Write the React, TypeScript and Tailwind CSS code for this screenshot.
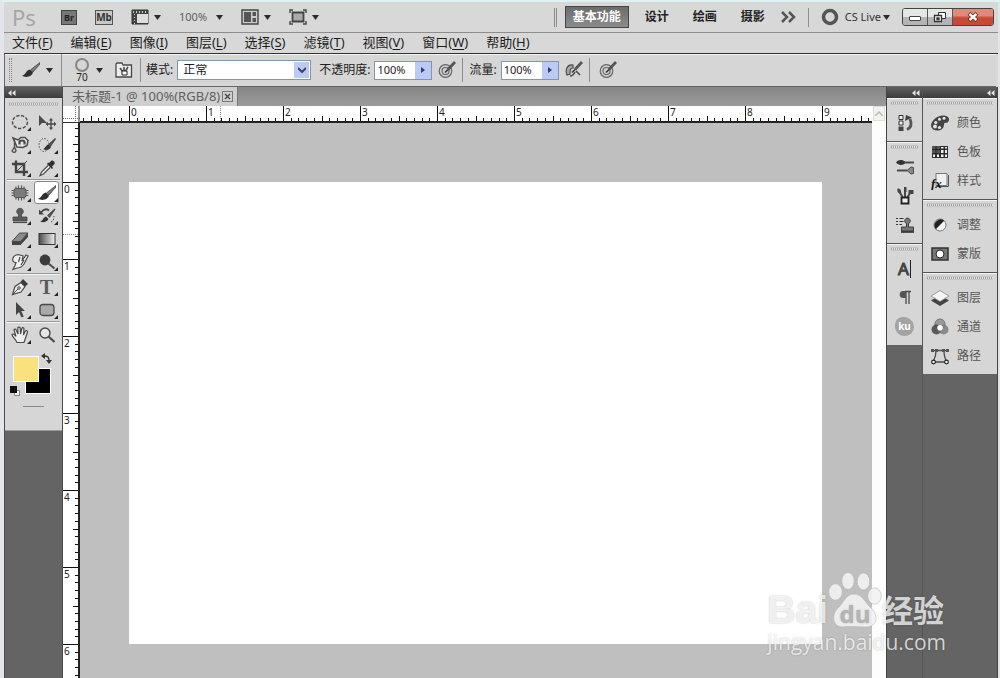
import React, { useLayoutEffect, useRef, useState } from 'react';
import clsx from 'clsx';

type IconProps = { className?: string };
type IconType = (props: IconProps) => React.ReactElement;

/* ── Data ── */
const menus = [
  ['文件', 'F'],
  ['编辑', 'E'],
  ['图像', 'I'],
  ['图层', 'L'],
  ['选择', 'S'],
  ['滤镜', 'T'],
  ['视图', 'V'],
  ['窗口', 'W'],
  ['帮助', 'H'],
];

const workspaces = ['基本功能', '设计', '绘画', '摄影'];

/* ── Small shared pieces ── */
function Svg({ children, className, size = 18 }: { children: React.ReactNode; className?: string; size?: number }) {
  return (
    <svg viewBox={`0 0 ${size} ${size}`} width={size} height={size} fill="none" stroke="#4a4a4a" className={clsx('shrink-0', className)} aria-hidden="true">
      {children}
    </svg>
  );
}

function Caret({ className }: IconProps) {
  return (
    <svg viewBox="0 0 7 5" width="7" height="5" className={clsx('shrink-0', className)} aria-hidden="true">
      <path d="M0 0h7L3.5 5z" fill="#2b2b2b" />
    </svg>
  );
}

function Collapse() {
  return (
    <svg viewBox="0 0 8 6" width="8" height="6" aria-hidden="true">
      <path d="M3.5 0v6L0 3zM7.5 0v6L4 3z" fill="#e4e4e4" />
    </svg>
  );
}

function Grip() {
  return <div className="h-1 border-y border-[#c4c4c4] bg-[repeating-linear-gradient(90deg,#a2a2a2_0_1px,#e2e2e2_1px_2px)]" />;
}

function Divider({ className }: IconProps) {
  return <div className={clsx('w-px shrink-0 bg-[#8f8f8f]', className)} />;
}

/* ── Tool icons ── */
const Marquee: IconType = () => (
  <Svg><ellipse cx="9" cy="9" rx="7.5" ry="6.5" strokeWidth="1.4" strokeDasharray="3.2 1.6" /></Svg>
);
const Move: IconType = () => (
  <Svg>
    <path d="M1 2v11l3-3h5z" fill="#4a4a4a" stroke="none" />
    <path d="M13 7v8M9 11h8" strokeWidth="1.4" />
    <path d="M13 5l2.200 2.500h-4.400zM13 17l2.200-2.500h-4.400zM7.500 11l2.500-2.200v4.400zM18.500 11L16 8.800v4.400z" fill="#4a4a4a" stroke="none" />
  </Svg>
);
const Lasso: IconType = () => (
  <Svg>
    <path d="M2 2l5 2 3-2.500h4l3 3-1 5-4 2-6-.5z" fill="#e6e6e6" strokeWidth="1.500" />
    <path d="M8.500 8.500V6c0-2 5-2 5 0v2.500" strokeWidth="2.200" />
    <path d="M3.500 4v7L1 15c1 2 4 1.500 4-.5L3.500 11" strokeWidth="1.300" />
  </Svg>
);
const QuickSelect: IconType = () => (
  <Svg>
    <ellipse cx="6" cy="9" rx="5" ry="6.500" strokeDasharray="1.500 1.500" />
    <path d="M17.500 2.500L11 8.500l1.500 1.500z" fill="#666" strokeWidth="1.300" />
    <path d="M5 13c2 0 2.500-4 5.500-4.500L13 11c-1 3-5 4-8 2z" fill="#333" stroke="none" />
  </Svg>
);
const Crop: IconType = () => (
  <Svg>
    <path d="M5 1.500v11.500h12M1 5h12v12" strokeWidth="2.400" stroke="#444" />
    <path d="M5.500 12.500L16 2" />
  </Svg>
);
const Eyedropper: IconType = () => (
  <Svg>
    <path d="M10 6.500L3.500 13 2 16.500 5.500 15 12 8.500" fill="#eee" strokeWidth="1.200" />
    <path d="M9 5l5 5 1-1-1-1.500L16.500 5c1.200-1.500-1.500-4.500-3.200-3.300L11 4 10 3.500z" fill="#333" stroke="none" />
  </Svg>
);
const Healing: IconType = () => (
  <Svg>
    <path d="M5 2.500v13M7.500 1.500v15M10.500 1.500v15M13 2.500v13M.5 6.500h17M.5 9h17M.5 11.500h17" strokeWidth="1.100" stroke="#555" />
    <rect x="3" y="4.500" width="12" height="9" rx="2" fill="#7c7c7c" stroke="#555" />
  </Svg>
);
const Brush: IconType = () => (
  <Svg>
    <path d="M18 1.500L9 8.500l2 2.500 7-8z" fill="#7d7d7d" stroke="#444" strokeWidth=".8" />
    <path d="M0 14.500c3.500 0 3.500-5 8-6l3 3c-1 4-7 6-11 3z" fill="#2f2f2f" stroke="none" />
  </Svg>
);
const Stamp: IconType = () => (
  <Svg>
    <path d="M7.500 7.500a3.300 3.300 0 1 1 3 0V10h5.500v4h-14v-4h5.500z" fill="#5a5a5a" stroke="#444" strokeWidth=".8" />
    <path d="M2 15.500h14" strokeWidth="1.200" />
  </Svg>
);
const HistoryBrush: IconType = () => (
  <Svg>
    <path d="M17 2l-7 6.500 1.500 1.500z" fill="#777" strokeWidth="1.300" />
    <path d="M2 14.500c2.500 0 3-4 6-5l2.500 2.500c-1 3-5.500 4-8.500 2.500z" fill="#333" stroke="none" />
    <path d="M3 5.500c3-4 6-3.500 8-2" strokeWidth="1.800" />
    <path d="M1 2.500v5h5z" fill="#444" stroke="none" />
    <path d="M13 15c3-1 3-4 3-6" strokeDasharray="1.500 1.500" />
  </Svg>
);
const Eraser: IconType = () => (
  <Svg>
    <path d="M1 11.500L8.500 3H17l-7.500 8.500z" fill="#8b8b8b" />
    <path d="M1 11.500V15h8.500v-3.500zM9.500 11.500V15L17 7V3z" fill="#444" stroke="none" />
  </Svg>
);
const Gradient: IconType = () => (
  <Svg>
    <defs>
      <linearGradient id="tool-gradient"><stop stopColor="#4c4c4c" /><stop offset="1" stopColor="#f2f2f2" /></linearGradient>
    </defs>
    <rect x="1" y="3.500" width="16" height="11" fill="url(#tool-gradient)" stroke="#333" />
  </Svg>
);
const Smudge: IconType = () => (
  <Svg>
    <path d="M2 5c1-3 5-4 7-3l3 1-1 5 4-6 2 1-4 8c-2 3-5 4-7 4l-4 1.500 2-4 1-3c-2 0-4-1-3-4.500z" fill="#f0f0f0" strokeWidth="1.200" />
    <path d="M9 4L7.500 9M13 7l-3 5" strokeWidth="1.200" />
  </Svg>
);
const Burn: IconType = () => (
  <Svg>
    <circle cx="7" cy="7" r="5.400" fill="#3c3c3c" stroke="none" />
    <path d="M10.500 10.500l6 5" strokeWidth="2" />
  </Svg>
);
const Pen: IconType = () => (
  <Svg>
    <path d="M1.500 16.500L4 8.500l6-4 4 4-4 5.500z" fill="#eee" strokeWidth="1.200" />
    <path d="M9.500 4l2.500-3 5 5-3 2.500z" fill="#3c3c3c" stroke="none" />
    <path d="M2 16l5-5" /><circle cx="8" cy="10" r="1.300" />
  </Svg>
);
const TypeTool: IconType = () => (
  <span className="font-['Liberation_Serif',serif] text-[20px] font-bold leading-none text-[#5a5a5a]">T</span>
);
const PathSelect: IconType = () => (
  <Svg><path d="M5 1v13l3-3 2.500 5.500 2.200-1-2.500-5.500H14z" fill="#444" stroke="none" /></Svg>
);
const Shape: IconType = () => (
  <Svg><rect x="2" y="3.500" width="14" height="11" rx="3" fill="#aaa" strokeWidth="1.300" /></Svg>
);
const Hand: IconType = () => (
  <Svg>
    <path d="M6 16.500C4.500 13 1 10.500 1 8.500c1-1.200 2.500 0 4 2L3 4c.5-1.500 2-1 2.300.2L7 8 6.800 2c.5-1.300 2-1.300 2.400 0L9.500 8l1.300-5.500c.6-1.200 2-1 2.200.3L12.500 9l1.700-3.700c1-1.200 2.600-.5 2.300 1L14.500 12l-1.500 4.500z" fill="#eee" strokeWidth="1.200" />
  </Svg>
);
const Zoom: IconType = () => (
  <Svg>
    <circle cx="7" cy="7" r="5" fill="#e6e6e6" strokeWidth="1.400" />
    <path d="M10.500 10.500l6 5.500" strokeWidth="2.200" />
  </Svg>
);

/* ── Panel icons ── */
const HistoryPanel: IconType = () => (
  <Svg>
    <path d="M3 1.500h4v4H3zM3 7h4v4H3z" fill="#eee" stroke="#333" /><path d="M2.500 12.500h5v4.500h-5z" fill="#444" stroke="none" />
    <path d="M11 15.500c4.500-2 5-6 3-10.500" strokeWidth="2.800" stroke="#555" /><path d="M9 7l1-6 6 2.500z" fill="#444" stroke="none" />
  </Svg>
);
const BrushPresets: IconType = () => (
  <Svg>
    <path d="M0 4.500c2-3.500 7-3 9-1v2c-2 2-7 2-9-1z" fill="#333" stroke="none" />
    <path d="M8 4.500h10M1 12.500h10" strokeWidth="1.800" /><path d="M11 12.500l4-3.500 2.500.5v6L15 16z" fill="#888" />
  </Svg>
);
const BrushPanel: IconType = () => (
  <Svg>
    <path d="M6.500 10L3 4M9 10V2M11.500 10L15 5" strokeWidth="2" />
    <path d="M1.500 1.500c3 0 4 2 3.500 5-3 0-4-2-3.500-5zM12.500 3h5v4h-5zM8 0h2.500v5H8z" fill="#444" stroke="none" />
    <path d="M5.500 10.500h7v6h-7z" fill="#eee" stroke="#222" strokeWidth="1.800" />
  </Svg>
);
const ClonePanel: IconType = () => (
  <Svg>
    <path d="M0 2.500h2M0 5.500h2M0 8.500h2M3.500 2.500h4M3.500 5.500h4M3.500 8.500h2.500" stroke="#333" />
    <path d="M10.500 7.500a2.800 2.800 0 1 1 2 0V11h5v4h-12v-4h5z" fill="#777" stroke="#333" strokeWidth=".9" /><path d="M5 16h13" stroke="#222" strokeWidth="1.500" />
  </Svg>
);
const Character: IconType = () => (
  <span className="border-r border-[#222] pr-px font-['Noto_Sans',sans-serif] text-[17px] leading-[18px] text-[#444] [-webkit-text-stroke:1px_#444]">A</span>
);
const Paragraph: IconType = () => (
  <Svg><path d="M9 2.500H15M10 3v12M13 3v12" strokeWidth="1.300" /><path d="M10 2H7C2.500 2 2.500 9 7 9h3z" fill="#555" stroke="none" /></Svg>
);
const Kuler: IconType = () => (
  <span className="flex size-[19px] items-center justify-center rounded-[8px_10px_9px_9px] bg-[#a3a3a3] pb-px font-['Noto_Sans',sans-serif] text-[10px] font-bold leading-none text-white">ku</span>
);
const Palette: IconType = () => (
  <Svg>
    <path d="M0 12C0 7 6 1 13 1.500c6 .5 6 5.500 3.500 7l-3 .5c-1 1 0 3-1.500 5C9 18 1 17.500 0 12z" fill="#444" stroke="none" />
    <g fill="#e5e5e5" stroke="none"><circle cx="4" cy="12.500" r="1.900" /><circle cx="4.800" cy="8.500" r="1.600" /><circle cx="8.500" cy="5.200" r="1.500" /><circle cx="13" cy="4.300" r="1.500" /><circle cx="8.500" cy="13.500" r="1.600" /></g>
  </Svg>
);
const Swatches: IconType = () => (
  <Svg>
    <path d="M1 3h16v12H1z" fill="#2c2c2c" stroke="none" />
    <path d="M1 3h8v7H1z" fill="#555" stroke="none" />
    <path d="M10 7h2.500v3H10zM14 7h2v3h-2zM10 11.500h2.500V14H10zM14 11.500h2V14h-2zM14 4h2v1.500h-2zM10 4h2.500v1.500H10zM6 11.500h2V14H6zM2 11.500h2V14H2z" fill="#eee" stroke="none" />
    <path d="M5 3v7M1 6.500h8" stroke="#222" strokeWidth="1" />
  </Svg>
);
const Styles: IconType = () => (
  <Svg>
    <path d="M5 1.500h11v12H5z" fill="#f0f0f0" stroke="#777" /><path d="M6 14.500h11.500V3" stroke="#555" />
    <text x="0" y="16" fill="#111" stroke="none" fontSize="13" fontStyle="italic" fontWeight="bold" fontFamily="Liberation Serif, serif">fx</text>
  </Svg>
);
const Adjustments: IconType = () => (
  <Svg><circle cx="9" cy="9" r="6" fill="#f5f5f5" stroke="#777" /><path d="M13.200 4.800A6 6 0 0 0 4.800 13.200z" fill="#222" stroke="none" /></Svg>
);
const Masks: IconType = () => (
  <Svg><path d="M1 3h16v12H1z" fill="#777" stroke="#333" strokeWidth="1.500" /><circle cx="9" cy="9" r="4" fill="#fff" stroke="#222" /></Svg>
);
const Layers: IconType = () => (
  <Svg><path d="M0 11.500L9 6l9 5.500L9 17z" fill="#444" stroke="none" /><path d="M0 7L9 1.500 18 7l-9 5.500z" fill="#f4f4f4" stroke="#888" strokeWidth=".8" /></Svg>
);
const Channels: IconType = () => (
  <Svg>
    <circle cx="9" cy="6" r="5" fill="#999" stroke="#777" /><circle cx="5.500" cy="11.500" r="5" fill="#444" stroke="none" opacity=".85" />
    <circle cx="12.500" cy="11.500" r="5" fill="#777" stroke="none" opacity=".8" /><circle cx="9" cy="9.800" r="2.800" fill="#fff" stroke="none" />
  </Svg>
);
const Paths: IconType = () => (
  <Svg>
    <path d="M1 3.500h16M5 4C5 10 3 13 2 15h14c-2-3-3-6-3-11" strokeWidth="1.300" /><path d="M0 2h3v3H0zM4 2h3v3H4zM11 2h3v3h-3zM15 2h3v3h-3z" fill="#555" stroke="none" />
    <circle cx="2.500" cy="15" r="1.800" fill="#fff" stroke="#222" strokeWidth="1.200" /><circle cx="15.500" cy="15" r="1.800" fill="#fff" stroke="#222" strokeWidth="1.200" />
  </Svg>
);

type Tool = { label: string; icon: IconType; more?: boolean };

const toolGroups: Tool[][] = [
  [
    { label: '椭圆选框工具', icon: Marquee, more: true },
    { label: '移动工具', icon: Move },
    { label: '磁性套索工具', icon: Lasso, more: true },
    { label: '快速选择工具', icon: QuickSelect, more: true },
    { label: '裁剪工具', icon: Crop, more: true },
    { label: '吸管工具', icon: Eyedropper, more: true },
  ],
  [
    { label: '修复画笔工具', icon: Healing, more: true },
    { label: '画笔工具', icon: Brush, more: true },
    { label: '仿制图章工具', icon: Stamp, more: true },
    { label: '历史记录画笔工具', icon: HistoryBrush, more: true },
    { label: '橡皮擦工具', icon: Eraser, more: true },
    { label: '渐变工具', icon: Gradient, more: true },
    { label: '涂抹工具', icon: Smudge, more: true },
    { label: '加深工具', icon: Burn, more: true },
  ],
  [
    { label: '钢笔工具', icon: Pen, more: true },
    { label: '横排文字工具', icon: TypeTool, more: true },
    { label: '路径选择工具', icon: PathSelect, more: true },
    { label: '圆角矩形工具', icon: Shape, more: true },
  ],
  [
    { label: '抓手工具', icon: Hand, more: true },
    { label: '缩放工具', icon: Zoom },
  ],
];

const iconDock: Tool[][] = [
  [{ label: '历史记录', icon: HistoryPanel }],
  [
    { label: '画笔预设', icon: BrushPresets },
    { label: '画笔', icon: BrushPanel },
    { label: '仿制源', icon: ClonePanel },
  ],
  [
    { label: '字符', icon: Character },
    { label: '段落', icon: Paragraph },
    { label: 'Kuler', icon: Kuler },
  ],
];

const labelDock: Tool[][] = [
  [
    { label: '颜色', icon: Palette },
    { label: '色板', icon: Swatches },
    { label: '样式', icon: Styles },
  ],
  [
    { label: '调整', icon: Adjustments },
    { label: '蒙版', icon: Masks },
  ],
  [
    { label: '图层', icon: Layers },
    { label: '通道', icon: Channels },
    { label: '路径', icon: Paths },
  ],
];

/* ── Title bar ── */
function TitleBar() {
  const [workspace, setWorkspace] = useState('基本功能');

  return (
    <header className="flex h-[31px] shrink-0 items-center border-b border-[#8c8c8c] bg-[#d8d8d8] pl-2 pr-1">
      <div className="flex items-center gap-[18px]">
        <span className="w-[31px] text-[22px] leading-none text-[#a6a6a6]">Ps</span>
        <button aria-label="Bridge" className="flex h-[15px] w-4 items-center justify-center border border-[#444] bg-[#777] text-[9px] font-bold leading-none text-[#222]">Br</button>
        <button aria-label="Mini Bridge" className="flex h-[15px] w-[18px] items-center justify-center border border-[#555] bg-[#c8c8c8] text-[10px] font-bold leading-none text-[#333]">Mb</button>
        <button aria-label="查看额外内容" className="flex items-center gap-[5px]">
          <Svg><path d="M1 2h16v14H1z" fill="#444" stroke="#333" /><path d="M6 6h11v9H6z" fill="#ddd" stroke="none" /><path d="M2 4h15" stroke="#ccc" strokeWidth="2" strokeDasharray="1 2" /><path d="M3.500 6v10" stroke="#ccc" strokeDasharray="1 2" /></Svg>
          <Caret />
        </button>
        <button aria-label="缩放级别" className="flex items-center gap-[9px] text-[11px] text-[#606060]">100%<Caret /></button>
        <button aria-label="排列文档" className="flex items-center gap-[5px]">
          <Svg><path d="M1 2h16v14H1z" fill="#ccc" stroke="#444" strokeWidth="1.400" /><path d="M3 4h7v10H3zM11.500 4H15v4h-3.500zM11.500 10H15v4h-3.500z" fill="#555" stroke="none" /></Svg>
          <Caret />
        </button>
        <button aria-label="屏幕模式" className="flex items-center gap-[5px]">
          <Svg><path d="M3.500 4.500h11v9h-11z" fill="#aaa" stroke="#444" strokeWidth="1.800" /><path d="M1 5V2h3M14 2h3v3M1 13v3h3M14 16h3v-3" stroke="#444" strokeWidth="1.400" /></Svg>
          <Caret />
        </button>
      </div>

      <div className="ml-auto flex items-center">
        <div className="mr-2 h-[19px] w-[3px] border-x border-[#8a8a8a]" />
        <nav className="flex items-center">
          {workspaces.map((name) => (
            <button
              key={name}
              onClick={() => setWorkspace(name)}
              className={clsx(
                'h-[22px] text-xs font-bold leading-none',
                name === workspace
                  ? 'mr-1 border border-[#444] bg-linear-to-b from-[#6c6c6c] to-[#8c8c8c] px-[7px] text-white'
                  : 'px-3 text-[#222]'
              )}
            >
              {name}
            </button>
          ))}
        </nav>
        <button aria-label="更多工作区" className="ml-1">
          <svg viewBox="0 0 15 12" width="15" height="12" fill="none" stroke="#555" strokeWidth="2.500" aria-hidden="true"><path d="M1 1l5 5-5 5M8 1l5 5-5 5" /></svg>
        </button>
        <Divider className="mx-3 h-[19px]" />
        <button className="flex items-center text-[11px] text-[#333]">
          <Svg className="mr-[6px]"><circle cx="9" cy="9" r="6.500" stroke="#555" strokeWidth="3.600" /></Svg>
          CS Live
          <Caret className="ml-[2px]" />
        </button>
        <div className="ml-3 flex h-[18px] w-[92px] overflow-hidden rounded-[3px] border border-[#444]">
          <button aria-label="最小化" className="flex w-[25px] items-center justify-center border-r border-[#555] bg-linear-to-b from-[#e6e6e6] from-50% to-[#b4b4b4] to-50%">
            <span className="mt-[3px] h-[5px] w-3 rounded-[1px] border border-[#444] bg-white" />
          </button>
          <button aria-label="还原" className="flex w-[25px] items-center justify-center border-r border-[#555] bg-linear-to-b from-[#e6e6e6] from-50% to-[#b4b4b4] to-50%">
            <svg viewBox="0 0 14 12" width="14" height="12" fill="#fff" stroke="#333" aria-hidden="true"><path d="M5.500 1.500h7v6h-7z" /><path d="M1.500 4.500h7v6h-7zM4 7h2v1.500H4z" strokeWidth="1.300" /></svg>
          </button>
          <button aria-label="关闭" className="flex flex-1 items-center justify-center bg-linear-to-b from-[#de8b7b] from-40% to-[#c84a36] to-55%">
            <svg viewBox="0 0 12 10" width="12" height="10" aria-hidden="true"><path d="M2 1.500l8 7M10 1.500l-8 7" stroke="#5a2a24" strokeWidth="4" /><path d="M2.500 2l7 6M9.500 2l-7 6" stroke="#fff" strokeWidth="2.400" /></svg>
          </button>
        </div>
      </div>
    </header>
  );
}

function MenuBar() {
  return (
    <nav className="flex h-[21px] shrink-0 items-center gap-[18px] border-b border-[#333] bg-[#d8d8d8] pb-[2px] pl-2">
      {menus.map(([name, key]) => (
        <button key={key} className="text-[13px] leading-[18px] text-[#1c1c1c]">
          {name}(<span className="underline underline-offset-2">{key}</span>)
        </button>
      ))}
    </nav>
  );
}

/* ── Options bar ── */
function PercentField({ id, label }: { id: string; label: string }) {
  const [value, setValue] = useState('100%');
  return (
    <div className="flex items-center gap-1">
      <label htmlFor={id} className="whitespace-nowrap">{label}</label>
      <div className="flex h-[19px] w-[58px] border border-[#8296ae] bg-white">
        <input id={id} value={value} onChange={(e) => setValue(e.target.value)} className="w-10 min-w-0 pl-[2px] text-[11px] text-[#1c1c1c] outline-none" />
        <button aria-label={`调整${label}`} className="flex flex-1 items-center justify-center bg-[#bccbf5]">
          <svg viewBox="0 0 4 6" width="4" height="6" aria-hidden="true"><path d="M0 0l4 3-4 3z" fill="#2f3f70" /></svg>
        </button>
      </div>
    </div>
  );
}

function PressureIcon({ slashed }: { slashed?: boolean }) {
  return (
    <Svg>
      {slashed ? (
        <>
          <path d="M8 4C2 3 0 9 2 14l3-1c0-4 0-6 3-6z" fill="#aaa" strokeWidth="1.200" />
          <path d="M5 15c3 0 4-2 5-4M11 10l4 4" strokeWidth="1.600" />
        </>
      ) : (
        <>
          <circle cx="7.500" cy="10" r="6.300" fill="#d0d0d0" strokeWidth="1.200" stroke="#666" />
          <circle cx="7.500" cy="10" r="3.500" strokeWidth="1.200" stroke="#666" />
        </>
      )}
      <path d="M17 1L10 8.500" strokeWidth="2.800" stroke="#555" />
      <path d="M10 8.500L7 11.500" strokeWidth="1.600" stroke="#333" />
    </Svg>
  );
}

function OptionsBar() {
  return (
    <section aria-label="工具选项" className="mr-[2px] flex h-[33px] shrink-0 items-center border-b border-l border-[#666] bg-[#d6d6d6] text-xs text-[#1c1c1c] shadow-[inset_0_1px_0_#f4f4f4]">
      <div className="ml-1 h-6 w-[3px] border-x border-dotted border-[#888]" />
      <button aria-label="工具预设" className="ml-[10px] flex items-center gap-[6px]">
        <Brush />
        <Caret />
      </button>
      <Divider className="ml-2 h-full" />
      <button aria-label="画笔大小" className="ml-3 flex items-center gap-[6px]">
        <span className="flex w-4 flex-col items-center text-[10px] leading-[10px]">
          <span className="size-[14px] rounded-full border-2 border-[#858585]" />
          70
        </span>
        <Caret />
      </button>
      <button aria-label="切换画笔面板" className="ml-3">
        <Svg><path d="M1 16V3l1-1h5l1 2h8.500v12z" fill="#eee" strokeWidth="1.300" /><path d="M5 7l3 4M13 6l-3 5M9 6v4" strokeWidth="1.600" /><path d="M7 10h5v4H7z" fill="#fff" stroke="#222" /></Svg>
      </button>
      <Divider className="ml-[7px] mr-[5px] h-6" />
      <label htmlFor="mode" className="whitespace-nowrap">模式:</label>
      <div className="relative ml-1 h-5 w-[134px] border border-[#8296ae] bg-white">
        <select id="mode" className="h-full w-full appearance-none pl-[5px] text-xs leading-none outline-none">
          <option>正常</option>
        </select>
        <span className="pointer-events-none absolute inset-y-px right-px flex w-[15px] items-center justify-center bg-[#bccbf5]">
          <svg viewBox="0 0 8 6" width="8" height="6" fill="none" stroke="#34446e" strokeWidth="2" aria-hidden="true"><path d="M0 1l4 4 4-4" /></svg>
        </span>
      </div>
      <div className="ml-2 flex items-center gap-[6px]">
        <PercentField id="opacity" label="不透明度:" />
        <button aria-label="不透明度压力"><PressureIcon /></button>
        <Divider className="h-6" />
        <PercentField id="flow" label="流量:" />
        <button aria-label="喷枪"><PressureIcon slashed /></button>
        <Divider className="h-6" />
        <button aria-label="大小压力" className="ml-[3px]"><PressureIcon /></button>
      </div>
    </section>
  );
}

/* ── Toolbox ── */
function Toolbox() {
  const [active, setActive] = useState('画笔工具');

  return (
    <aside className="w-[59px] shrink-0 border-x border-[#4a4a4a] bg-[#646464]">
      <div className="flex h-[11px] items-center bg-linear-to-b from-[#606060] to-[#3c3c3c] pl-[3px]"><Collapse /></div>
      <div className="border-b border-[#999] bg-[#d6d6d6] pb-[23px]">
        <div className="px-1 py-1"><Grip /></div>
        {toolGroups.map((group, i) => (
          <div key={i} className={clsx('mx-[2px] grid grid-cols-2 gap-x-[2px] pr-px', i > 0 && 'border-t border-[#9a9a9a] pt-px shadow-[inset_0_1px_0_#f4f4f4]')}>
            {group.map(({ label, icon: Icon, more }) => (
              <button
                key={label}
                aria-label={label}
                onClick={() => setActive(label)}
                className={clsx('relative flex h-[23px] items-center justify-center rounded-[3px] border', active === label ? 'border-[#888] bg-white' : 'border-transparent')}
              >
                <Icon />
                {more && <span className="absolute bottom-px right-0 border-b-4 border-l-4 border-b-[#222] border-l-transparent" />}
              </button>
            ))}
          </div>
        ))}
        <div className="relative mx-2 mt-[10px] h-[38px]">
          <button aria-label="背景色" className="absolute left-3 top-3 size-[26px] border border-white bg-black" />
          <button aria-label="前景色" className="absolute left-0 top-0 size-[26px] border border-white bg-[#f9e27d]" />
          <button aria-label="切换前景色和背景色" className="absolute left-7 top-[-3px]">
            <svg viewBox="0 0 11 11" width="11" height="11" fill="none" stroke="#333" strokeWidth="1.400" aria-hidden="true"><path d="M3 3c4 0 5 1 5 5" /><path d="M0 3l4-3v6zM8 11L5 7h6z" fill="#333" stroke="none" /></svg>
          </button>
          <button aria-label="默认前景色和背景色" className="absolute left-[-3px] top-[30px]">
            <svg viewBox="0 0 11 11" width="11" height="11" aria-hidden="true"><path d="M4.500 4.500h5v5h-5z" fill="#fff" stroke="#888" /><path d="M0 0h7v7H0z" fill="#111" /></svg>
          </button>
        </div>
        <div className="mx-auto mt-3 h-px w-[21px] bg-[#888]" />
      </div>
    </aside>
  );
}

/* ── Rulers ── */
const UNIT = 77;

// Draws the ticks that fit in the space the ruler has, counted from the paper's edge
function Ruler({ vertical, origin, pointer }: { vertical?: boolean; origin: number; pointer: number }) {
  const ref = useRef<HTMLDivElement>(null);
  const [length, setLength] = useState(0);

  useLayoutEffect(() => {
    const el = ref.current;
    if (!el) return;
    const measure = () => setLength(vertical ? el.clientHeight : el.clientWidth);
    measure();
    const observer = new ResizeObserver(measure);
    observer.observe(el);
    return () => observer.disconnect();
  }, [vertical]);

  const first = -Math.floor((origin * 10) / UNIT);
  const count = Math.max(0, Math.floor(((length - origin) * 10) / UNIT) - first + 1);
  const ticks = Array.from({ length: count }, (_, i) => first + i);
  const labels = ticks.filter((i) => i % 10 === 0 && i >= 0 && origin + (i * UNIT) / 10 + 14 < length);

  return (
    <div ref={ref} className={clsx('overflow-hidden border-[#222] bg-white', vertical ? 'w-[17px] shrink-0 border-r-2' : 'h-[17px] min-w-0 flex-1 border-b-2')}>
      <svg className="block" width={vertical ? 15 : length} height={vertical ? length : 15} aria-hidden="true">
        {ticks.map((i) => {
          const at = origin + 0.5 + Math.round((i * UNIT) / 10);
          const from = i % 10 === 0 ? 0 : i % 5 === 0 ? 10 : 12;
          return <path key={i} d={vertical ? `M${from} ${at}H15` : `M${at} ${from}V15`} stroke="#111" />;
        })}
        {labels.map((i) => {
          const at = origin + (i * UNIT) / 10;
          return (
            <text key={i} x={vertical ? 1 : at + 2} y={vertical ? at + 11 : 10} fontSize="10" fill="#222">{i / 10}</text>
          );
        })}
        <path d={vertical ? `M0 ${pointer}H15` : `M${pointer} 0V15`} stroke="#888" strokeDasharray="1 1" />
      </svg>
    </div>
  );
}

/* ── Document window ── */
function DocumentWindow() {
  return (
    <main className="flex min-w-0 flex-1 flex-col border-r border-[#444]">
      <div className="flex h-[19px] shrink-0 bg-linear-to-b from-[#868686] to-[#9b9b9b]">
        <div className="flex items-center gap-[2px] border-r border-[#777] bg-[#cfcfcf] pl-[9px] pr-1 text-[13px] leading-[19px] text-[#606060]">
          <span className="whitespace-nowrap">未标题-1 @ 100%(RGB/8)</span>
          <button aria-label="关闭文档" className="flex size-[11px] items-center justify-center border border-[#777]">
            <svg viewBox="0 0 7 7" width="7" height="7" stroke="#444" strokeWidth="1.300" aria-hidden="true"><path d="M1 1l5 5M6 1L1 6" /></svg>
          </button>
        </div>
      </div>

      <div className="flex min-h-0 flex-1">
        <div className="flex min-w-0 flex-1 flex-col">
          <div className="flex shrink-0">
            <svg width="17" height="17" className="shrink-0 bg-white" aria-hidden="true">
              <path d="M12.500 0V17M0 12.500H17" stroke="#666" strokeDasharray="1 1" />
              <path d="M16 0V17M0 16.500H17" stroke="#333" />
            </svg>
            <Ruler origin={49} pointer={140.5} />
          </div>
          <div className="flex min-h-0 flex-1">
            <Ruler vertical origin={59} pointer={111.5} />
            <div className="flex min-w-0 flex-1 bg-[#bfbfbf] pb-[34px] pl-[49px] pr-[50px] pt-[59px]">
              <div className="flex-1 bg-white" />
            </div>
          </div>
        </div>
        <div className="w-[14px] shrink-0 bg-[#fdfdfb]">
          <button aria-label="向上滚动" className="mx-auto flex h-[15px] w-3 items-center justify-center border border-[#ddd] bg-[#f3f3ee]">
            <svg viewBox="0 0 8 5" width="8" height="5" fill="none" stroke="#bbb" strokeWidth="1.500" aria-hidden="true"><path d="M0 5l4-4 4 4" /></svg>
          </button>
        </div>
      </div>
    </main>
  );
}

/* ── Panel docks ── */
function Dock({ groups, labelled }: { groups: Tool[][]; labelled?: boolean }) {
  return (
    <div className={clsx('flex flex-col', labelled ? 'w-[74px]' : 'w-9 border-r border-[#555]')}>
      <div className="flex h-[11px] shrink-0 items-center justify-end bg-linear-to-b from-[#606060] to-[#3c3c3c] pr-[2px]"><Collapse /></div>
      {groups.map((group, i) => (
        <div key={i} className={clsx('bg-[#d6d6d6] pb-1 shadow-[inset_0_1px_0_#f4f4f4]', i > 0 && 'border-t border-[#555]')}>
          <div className="px-1 py-[3px]"><Grip /></div>
          {group.map(({ label, icon: Icon }) => (
            <button key={label} aria-label={label} className={clsx('flex h-[29px] w-full items-center text-xs text-[#555]', labelled ? 'gap-2 pl-2' : 'justify-center')}>
              <Icon />
              {labelled && label}
            </button>
          ))}
        </div>
      ))}
    </div>
  );
}

/* ── Watermark ── */
function Watermark() {
  return (
    <div className="pointer-events-none absolute bottom-[22px] right-[52px] text-white/75 [text-shadow:0_0_2px_#00000040]">
      <div className="flex items-end">
        <span className="font-['Liberation_Sans',sans-serif] text-[39px] font-bold leading-9">Bai</span>
        <div className="relative flex w-[54px] items-end justify-center">
          <svg viewBox="0 0 54 56" width="54" height="56" fill="#f2f2f2" stroke="#b4b4b4" strokeWidth=".6" opacity=".9" aria-hidden="true">
            <ellipse cx="7.500" cy="20" rx="6.800" ry="8.200" /><ellipse cx="20" cy="9" rx="6.200" ry="8.500" /><ellipse cx="35.500" cy="9.500" rx="6.300" ry="8.500" /><ellipse cx="46.500" cy="24" rx="6.800" ry="8.200" />
            <path d="M26 22c8 0 11 8 16 13 9 8 8 19-3 20-8 0-17-1-25 0-10-1-11-13-3-20C16 30 18 22 26 22z" />
          </svg>
          <span className="absolute bottom-0 font-['Open_Sans',sans-serif] text-[24px] font-bold leading-7 text-[#b4b4b4]">du</span>
        </div>
        <span className="text-[31px] font-bold leading-9">经验</span>
      </div>
      <div className="font-['Open_Sans',sans-serif] text-[21px] leading-7">jingyan.baidu.com</div>
    </div>
  );
}

export default function App() {
  return (
    <div className="relative flex h-screen flex-col overflow-hidden border-l-4 border-r-2 border-t-2 border-l-[#e4e4ec] border-r-[#e4e4e4] border-t-[#dff3f3] bg-[#d8d8d8] font-['Noto_Sans','Noto_Sans_CJK_SC',sans-serif]">
      <TitleBar />
      <MenuBar />
      <OptionsBar />
      <div className="flex min-h-0 flex-1">
        <Toolbox />
        <DocumentWindow />
        <aside className="flex shrink-0 border-r border-[#444] bg-[#646464]">
          <Dock groups={iconDock} />
          <Dock groups={labelDock} labelled />
        </aside>
      </div>
      <Watermark />
    </div>
  );
}
